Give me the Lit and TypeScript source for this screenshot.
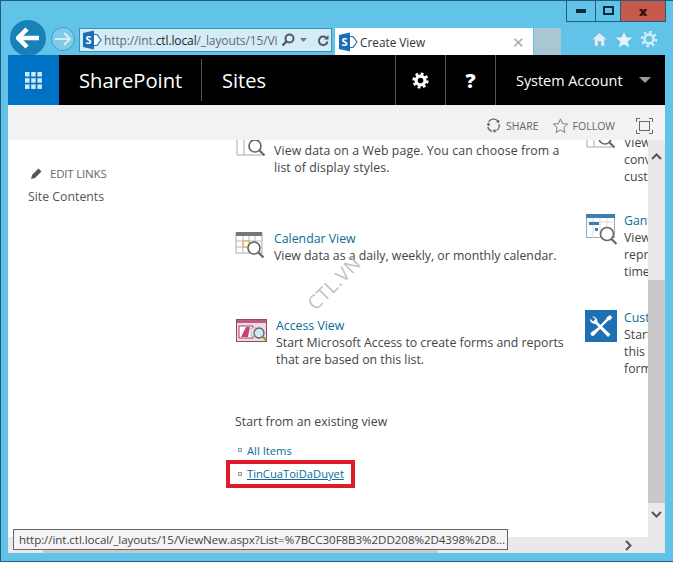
import { LitElement, html, css, svg } from "lit";
import { customElement } from "lit/decorators.js";

const spLogo = svg`<svg class="logo" width="20" height="20" viewBox="0 0 20 20"><path d="M11 4.500h4l4 5.500-4 5.500h-4z" fill="#fff" stroke="#1b6fb5" stroke-width="1.200"/><path d="M1 3l11-2.500v19L1 17z" fill="#1b6fb5"/><text x="3.400" y="14" font-size="11" font-weight="700" fill="#fff" font-family="Open Sans">S</text></svg>`;

const searchGlyph = svg`<circle cx="19" cy="17" r="6" fill="#fff" stroke="#666" stroke-width="1.700"/><path d="M23.500 21.500l5 5" stroke="#666" stroke-width="2.200"/>`;

const calIcon = svg`<svg width="30" height="30" viewBox="0 0 30 30"><rect x="1" y="2" width="26" height="20" fill="#fff" stroke="#aaa"/><rect x="1" y="1" width="26" height="4" fill="#777"/><path d="M1 10h26M1 16h26M8 5v17M14 5v17M20 5v17" stroke="#bbb"/><rect x="8" y="10" width="6" height="6" fill="#fdf3e3" stroke="#d9a066"/>${searchGlyph}</svg>`;
const webIcon = svg`<svg width="32" height="32" viewBox="0 0 32 32"><path d="M2 4v25h25M9 4v25M16 4v18M23 4v12" fill="none" stroke="#aaa"/><circle cx="20" cy="20" r="6" fill="#fff" stroke="#666" stroke-width="1.700"/><path d="M24.500 24.500l5 5" stroke="#666" stroke-width="2.200"/></svg>`;
const ganttIcon = svg`<svg width="32" height="32" viewBox="0 0 32 32"><rect x="1.500" y="1.500" width="28" height="23" fill="#fff" stroke="#9ab"/><rect x="1" y="1" width="29" height="4" fill="#3f7fb0"/><path d="M1.500 9h28M8 5v20M15 5v20M22 5v20" stroke="#d5dde3"/><rect x="4" y="9" width="10" height="3" fill="#3f7fb0"/><rect x="10" y="15" width="3" height="3" fill="#3f7fb0"/><circle cx="22" cy="21" r="6.500" fill="#fff" stroke="#666" stroke-width="1.600"/><path d="M26.500 26l5 5" stroke="#666" stroke-width="2.200"/></svg>`;
const accessIcon = svg`<svg width="32" height="24" viewBox="0 0 32 24"><rect x=".5" y=".5" width="30" height="22" fill="#ecdde3" stroke="#96476a"/><rect x="1" y="1" width="29" height="3" fill="#c05a86"/><path d="M3 7h14v12H3z" fill="#fff" stroke="#a83d6b"/><path d="M5 18l5-10 4 0-2 10z" fill="#c2447a"/><path d="M15 9h6v8h-6z" fill="#f3e7cf" stroke="#bbb"/><circle cx="23" cy="14" r="5" fill="#cfe8f2" stroke="#567" stroke-width="1.300"/><path d="M26.500 17.500l4 4" stroke="#8a9a3a" stroke-width="2.200"/></svg>`;
const customIcon = svg`<svg width="32" height="32" viewBox="0 0 32 32"><rect width="32" height="32" fill="#1f6fb4"/><path d="M7 6.500a5 5 0 0 1 5.500 5.500l13 12.500-2.500 2.500-12.500-13A5 5 0 0 1 5 8.500l3 3 2.500-2.500z" fill="#fff"/><path d="M25 5l2.500 2.500-3 3-1-.2L15 18.500 13.500 17l8.200-8.500-.2-1z" fill="#fff"/><path d="M14.500 16.500l1.500 1.500-7 7.500q-1.500 1-2.800-.2t-.2-2.800z" fill="#fff"/></svg>`;

interface Row { icon: unknown; title: string; lines: string[]; access?: boolean; wide?: boolean }

const left: Row[] = [
  { icon: webIcon, title: "Standard View", wide: true, lines: ["View data on a Web page. You can choose from a", "list of display styles."] },
  { icon: calIcon, title: "Calendar View", lines: ["View data as a daily, weekly, or monthly calendar."] },
  { icon: accessIcon, title: "Access View", access: true, lines: ["Start Microsoft Access to create forms and reports", "that are based on this list."] },
];
const right: Row[] = [
  { icon: webIcon, title: "Datasheet View", lines: ["View data in an editable", "convenient for bulk", "customization."] },
  { icon: ganttIcon, title: "Gantt View", lines: ["View list items in a Gantt", "representation of how", "time."] },
  { icon: customIcon, title: "Custom View", lines: ["Start SharePoint Designer", "this list with capabilities", "formatting."] },
];

@customElement("app-root")
export class AppRoot extends LitElement {
  static styles = css`
    :host { display: block; width: 673px; height: 562px; font-family: "Open Sans", "Liberation Sans", sans-serif; }
    * { box-sizing: border-box; }
    .frame { position: relative; width: 673px; height: 562px; background: #62c3e8; border: 1px solid #1d5f80; border-width: 1px 0 1px 1px; display: flex; flex-direction: column; overflow: hidden; }
    .chrome { height: 53px; flex: none; display: flex; padding-left: 9px; }
    .nav { display: flex; align-items: flex-start; padding-top: 19px; width: 324px; flex: none; }
    .back { width: 36px; height: 36px; border-radius: 50%; background: #1a80b8; display: flex; align-items: center; justify-content: center; flex: none; }
    .fwd { width: 24px; height: 24px; border-radius: 50%; background: #7fcbe8; border: 1px solid #3f9fc6; margin: 7px 0 0 5px; display: flex; align-items: center; justify-content: center; flex: none; }
    .addr { width: 253px; height: 24px; margin: 8px 0 0 4px; background: #d3edf8; border: 1px solid #3c8fb5; display: flex; align-items: center; padding-left: 2px; font-size: 12px; color: #667; white-space: nowrap; flex: none; overflow: hidden; }
    .logo { flex: none; }
    .addr .logo { margin-right: 2px; }
    .url { width: 176px; flex: none; overflow: hidden; letter-spacing: -.12px; }
    .url b { color: #222; font-weight: 400; }
    .addr .ctl { display: flex; align-items: center; gap: 5px; margin-left: 1px; }
    .addr .ctl .re { margin-left: 5px; }
    .tabs { display: flex; padding-top: 27px; padding-left: 1px; width: 232px; flex: none; }
    .tab { width: 198px; height: 27px; background: #fff; display: flex; align-items: center; padding: 0 8px 0 3px; font-size: 11.800px; color: #333; gap: 2px; }
    .tab span { flex: 1; }
    .tab .x { flex: none; color: #aaa; font-size: 15px; }
    .stub { width: 27px; height: 27px; margin-left: 1px; background: #a8c6d4; flex: none; }
    .rightc { flex: none; width: 100px; display: flex; flex-direction: column; }
    .win { display: flex; height: 22px; margin-top: -1px; flex: none; border: 1px solid #1d5f80; border-top: none; }
    .win div { display: flex; align-items: center; justify-content: center; }
    .win .b1 { width: 29px; border-right: 1px solid #1d5f80; }
    .win .b2 { width: 25px; border-right: 1px solid #1d5f80; }
    .win .b3 { flex: 1; background: #c6584c; color: #3a0c08; font-weight: 800; font-size: 13px; }
    .tools { display: flex; gap: 7px; padding: 8px 0 0 25px; align-items: center; }
    .body { width: 657px; margin-left: 7px; height: 482px; flex: none; display: flex; flex-direction: column; background: #fff; margin-top: 1px; }
    .suite { height: 50px; background: #000; flex: none; display: flex; align-items: stretch; color: #fff; }
    .launcher { width: 51px; background: #0072c6; display: flex; align-items: center; justify-content: center; flex: none; }
    .brand { padding-left: 20px; width: 142px; flex: none; font-size: 20.200px; display: flex; align-items: center; padding-bottom: 1px; }
    .sites { border-left: 1px solid #555; margin: 4px 0; padding-left: 20px; font-size: 20px; display: flex; align-items: center; flex: 1; }
    .sb { width: 50px; border-left: 1px solid #555; display: flex; align-items: center; justify-content: center; margin: 0; flex: none; font-weight: 800; font-size: 20px; }
    .acct { width: 170px; border-left: 1px solid #555; display: flex; align-items: center; padding-left: 20px; font-size: 14.400px; flex: none; gap: 16px; }
    .caret { width: 0; height: 0; border: 6px solid transparent; border-top: 6px solid #9a9a9a; border-bottom: none; }
    .ribbon { height: 35px; background: #f2f2f2; flex: none; display: flex; align-items: center; justify-content: flex-end; font-size: 10.500px; color: #666; padding: 6px 12px 0 0; }
    .ribbon .act { display: flex; align-items: center; gap: 4px; margin-right: 13px; }
    .ribbon .act.s { gap: 5px; margin-right: 13px; }
    .ribbon .focus { margin-left: 8px; }
    .main { flex: 1; min-height: 0; display: flex; overflow: hidden; position: relative; }
    .content { width: 640px; flex: none; display: flex; overflow: hidden; color: #444; font-size: 12.300px; line-height: 17px; }
    .side { width: 227px; flex: none; padding: 25px 0 0 20px; }
    .edit { display: flex; align-items: center; gap: 6px; font-size: 11.500px; color: #666; margin-left: 2px; letter-spacing: -.2px; }
    .edit svg { margin-right: 1px; }
    .sc { margin-top: 6px; color: #555; }
    .col { flex: none; width: 350px; margin-top: -14.600px; display: flex; flex-direction: column; }
    .col.r { margin-top: -23px; width: 200px; }
    .row { display: flex; margin-bottom: 53.400px; }
    .col.r .row { margin-bottom: 27px; }
    .col.r .row:nth-child(2) { margin-bottom: 29px; }
    .ic { width: 39px; flex: none; display: flex; }
    .ic.acc { width: 41px; padding: 1px 0 0 1px; }
    .ic svg { margin-top: 1px; }
    .ln { white-space: nowrap; }
    .wide .ln { letter-spacing: .1px; }
    .t { color: #0a6b98; }
    .start { margin-top: -9px; }
    .links { margin-top: 12px; display: flex; flex-direction: column; font-size: 11.200px; color: #0a6b98; }
    .li { display: flex; align-items: center; gap: 5px; padding-left: 3px; height: 17px; }
    .li i { width: 4px; height: 4px; border: 1px solid #8aa; background: #dde; flex: none; }
    .hit { margin: 1px 0 0 -9px; width: 129px; height: 28px; border: 4px solid #e01b2c; padding-left: 8px; display: flex; align-items: center; gap: 5px; }
    .hit i { width: 4px; height: 4px; border: 1px solid #8aa; background: #dde; flex: none; }
    .hit a { text-decoration: underline; color: #0a6b98; white-space: nowrap; }
    .vbar { flex: 1; background: #e9e9e9; display: flex; flex-direction: column; align-items: center; padding-top: 13px; }
    .vbar .gap { height: 120px; flex: none; }
    .vbar .thumb { width: 100%; height: 223px; background: #c9c9c9; flex: none; }
    .vbar .dn { margin-top: 8px; }
    .hbar { width: 657px; margin-left: 7px; flex: none; height: 16px; background: #e9e9e9; display: flex; align-items: center; position: relative; justify-content: flex-end; padding-right: 33px; }
    .hthumb { position: absolute; left: 35px; top: 8px; width: 395px; height: 8px; background: #c9c9c9; }
    .status { position: absolute; left: 12px; top: 528px; width: 495px; height: 21px; background: #f4f4f4; border: 1px solid #666; font-size: 11.600px; color: #444; padding-left: 5px; display: flex; align-items: center; white-space: nowrap; letter-spacing: -.08px; z-index: 3; }
    .mark { position: absolute; left: 300px; top: 269px; transform: rotate(-45deg); color: #c2c2c2; font-size: 19px; white-space: nowrap; letter-spacing: .5px; z-index: 2; }
  `;

  private rowTpl(r: Row) {
    return html`<div class="row ${r.wide ? "wide" : ""}"><div class="ic ${r.access ? "acc" : ""}">${r.icon}</div><div>
      <div class="ln t">${r.title}</div>${r.lines.map((l) => html`<div class="ln">${l}</div>`)}
    </div></div>`;
  }

  render() {
    return html`<div class="frame">
      <div class="chrome">
        <div class="nav">
          <div class="back"><svg width="24" height="22" viewBox="0 0 24 22"><path d="M11 2L2 11l9 9M2 11h21" fill="none" stroke="#fff" stroke-width="4.500"/></svg></div>
          <div class="fwd"><svg width="18" height="14" viewBox="0 0 18 14"><path d="M10 1l6 6-6 6M16 7H1" fill="none" stroke="#d6eef8" stroke-width="2"/></svg></div>
          <div class="addr">${spLogo}
            <div class="url">http://int.<b>ctl.local</b>/_layouts/15/Vi</div>
            <div class="ctl">
              <svg width="14" height="14" viewBox="0 0 14 14"><circle cx="8.500" cy="5.500" r="4" fill="none" stroke="#556" stroke-width="2"/><path d="M5.500 8.500L1.500 12.500" stroke="#556" stroke-width="2.400"/></svg>
              <svg width="7" height="4" viewBox="0 0 7 4"><path d="M0 0h7L3.500 4z" fill="#778"/></svg>
              <svg class="re" width="13" height="13" viewBox="0 0 13 13"><path d="M10.500 7.500a4.300 4.300 0 1 1-1.500-4" fill="none" stroke="#556" stroke-width="2"/><path d="M11.500 1v4.500H7z" fill="#556"/></svg>
            </div>
          </div>
        </div>
        <div class="tabs">
          <div class="tab">${spLogo}<span>Create View</span><div class="x">✕</div></div>
          <div class="stub"></div>
        </div>
        <div class="rightc">
          <div class="win">
            <div class="b1"><svg width="10" height="4"><rect width="10" height="4" fill="#0b2a40"/></svg></div>
            <div class="b2"><svg width="11" height="9"><rect x="1" y="1" width="9" height="7" fill="none" stroke="#0b2a40" stroke-width="2"/></svg></div>
            <div class="b3">x</div>
          </div>
          <div class="tools">
            <svg width="17" height="17" viewBox="0 0 17 17"><path d="M1 8.500L8.500 2 16 8.500h-2.500V15h-3.500v-4.500H7V15H3.500V8.500z" fill="#d8eff8" stroke="#9ad" stroke-width=".5"/></svg>
            <svg width="18" height="17" viewBox="0 0 18 17"><path d="M9 1l2.300 5.300 5.700.5-4.300 3.800 1.300 5.600L9 13.300l-5 2.900 1.300-5.600L1 6.800l5.700-.5z" fill="#e4f3fa"/></svg>
            <svg width="18" height="18" viewBox="0 0 18 18"><circle cx="9" cy="9" r="4.500" fill="none" stroke="#d8eff8" stroke-width="2.400"/><circle cx="9" cy="9" r="7" fill="none" stroke="#d8eff8" stroke-width="2.400" stroke-dasharray="2.500 3"/></svg>
          </div>
        </div>
      </div>
      <div class="body">
        <div class="suite">
          <div class="launcher"><svg width="17" height="17" viewBox="0 0 17 17" fill="#cfeafa"><rect width="4.500" height="4.500"/><rect x="6.200" width="4.500" height="4.500"/><rect x="12.400" width="4.500" height="4.500"/><rect y="6.200" width="4.500" height="4.500"/><rect x="6.200" y="6.200" width="4.500" height="4.500"/><rect x="12.400" y="6.200" width="4.500" height="4.500"/><rect y="12.400" width="4.500" height="4.500"/><rect x="6.200" y="12.400" width="4.500" height="4.500"/><rect x="12.400" y="12.400" width="4.500" height="4.500"/></svg></div>
          <div class="brand">SharePoint</div>
          <div class="sites">Sites</div>
          <div class="sb"><svg width="17" height="17" viewBox="0 0 18 18"><circle cx="9" cy="9" r="4.700" fill="none" stroke="#fff" stroke-width="3.400"/><circle cx="9" cy="9" r="7.200" fill="none" stroke="#fff" stroke-width="2.800" stroke-dasharray="3 2.650"/></svg></div>
          <div class="sb">?</div>
          <div class="acct">System Account<div class="caret"></div></div>
        </div>
        <div class="ribbon">
          <div class="act s"><svg width="15" height="15" viewBox="0 0 15 15"><path d="M11.500 2.500A6 6 0 0 0 2.500 4M1.800 9A6 6 0 0 0 6 13.300M13 6a6 6 0 0 1-2.500 6.500" fill="none" stroke="#667" stroke-width="1.300"/><circle cx="2.500" cy="6.500" r="1.400" fill="#667"/><circle cx="12" cy="3.500" r="1.400" fill="#667"/><circle cx="8.500" cy="13" r="1.400" fill="#667"/></svg>SHARE</div>
          <div class="act"><svg width="17" height="17" viewBox="0 0 18 17"><path d="M9 1.500l2.200 5 5.300.5-4 3.600 1.200 5.300L9 13.200l-4.700 2.700 1.200-5.300-4-3.600 5.300-.5z" fill="none" stroke="#777"/></svg>FOLLOW</div>
          <svg class="focus" width="17" height="16" viewBox="0 0 17 16"><path d="M.5 4V.5H4M13 .5h3.500V4M16.500 12v3.500H13M4 15.500H.5V12" fill="none" stroke="#667"/><rect x="3.500" y="3.500" width="10" height="9" fill="none" stroke="#667"/></svg>
        </div>
        <div class="main">
          <div class="content">
            <div class="side">
              <div class="edit"><svg width="13" height="13" viewBox="0 0 13 13"><path d="M1 12l1-4 6.500-6.500 3 3L5 11z" fill="#555"/></svg>EDIT LINKS</div>
              <div class="sc">Site Contents</div>
            </div>
            <div class="col">
              ${left.map((r) => this.rowTpl(r))}
              <div class="start">Start from an existing view</div>
              <div class="links">
                <div class="li"><i></i>All Items</div>
                <div class="hit"><i></i><a>TinCuaToiDaDuyet</a></div>
              </div>
            </div>
            <div class="col r">${right.map((r) => this.rowTpl(r))}</div>
          </div>
          <div class="vbar">
            <svg width="11" height="7" viewBox="0 0 11 7"><path d="M1 6l4.500-4.500L10 6" fill="none" stroke="#555" stroke-width="2"/></svg>
            <div class="gap"></div>
            <div class="thumb"></div>
            <svg class="dn" width="11" height="7" viewBox="0 0 11 7"><path d="M1 1l4.500 4.500L10 1" fill="none" stroke="#555" stroke-width="2"/></svg>
          </div>
        </div>
      </div>
      <div class="hbar">
        <div class="hthumb"></div>
        <svg width="7" height="11" viewBox="0 0 7 11"><path d="M1 1l4.500 4.500L1 10" fill="none" stroke="#555" stroke-width="2"/></svg>
      </div>
      <div class="status">http://int.ctl.local/_layouts/15/ViewNew.aspx?List=%7BCC30F8B3%2DD208%2D4398%2D8...</div>
      <div class="mark">CTL.VN</div>
    </div>`;
  }
}
